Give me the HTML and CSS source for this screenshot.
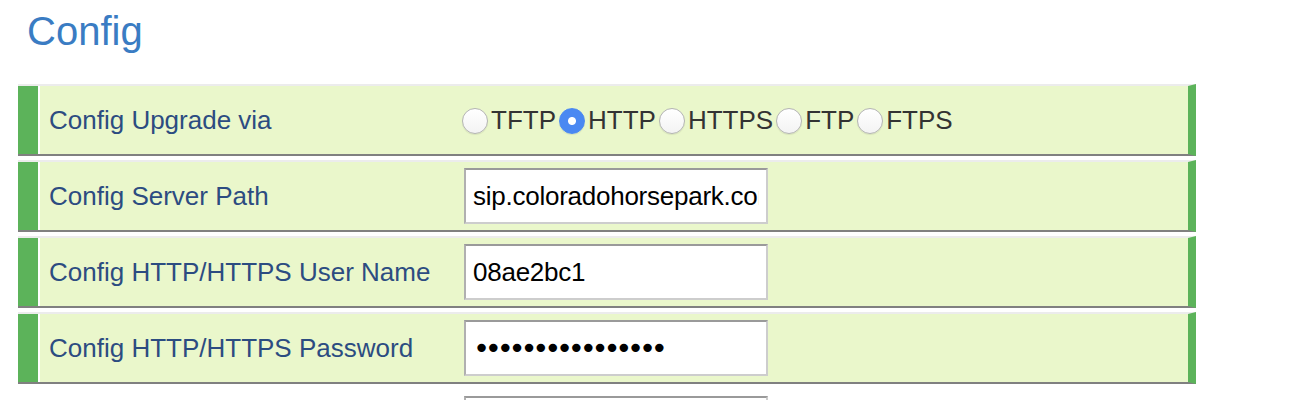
FILE: index.html
```html
<!DOCTYPE html>
<html>
<head>
<meta charset="utf-8">
<link rel="stylesheet" href="styles.css">
</head>
<body>
<div class="page">
  <h1 class="title">Config</h1>
  <div class="rows">
    <div class="row">
      <div class="marker"></div>
      <div class="label">Config Upgrade via</div>
      <div class="value">
        <input class="radio" type="radio" name="via"><span class="opt">TFTP</span>
        <input class="radio" type="radio" name="via" checked><span class="opt">HTTP</span>
        <input class="radio" type="radio" name="via"><span class="opt">HTTPS</span>
        <input class="radio" type="radio" name="via"><span class="opt">FTP</span>
        <input class="radio" type="radio" name="via"><span class="opt">FTPS</span>
      </div>
    </div>
    <div class="row">
      <div class="marker"></div>
      <div class="label">Config Server Path</div>
      <div class="value"><input class="field" type="text" value="sip.coloradohorsepark.com"></div>
    </div>
    <div class="row">
      <div class="marker"></div>
      <div class="label">Config HTTP/HTTPS User Name</div>
      <div class="value"><input class="field" type="text" value="08ae2bc1"></div>
    </div>
    <div class="row">
      <div class="marker"></div>
      <div class="label">Config HTTP/HTTPS Password</div>
      <div class="value"><input class="field pw" type="password" value="abcdefghijklmnop"></div>
    </div>
    <div class="row plain">
      <div class="marker"></div>
      <div class="label"></div>
      <div class="value"><input class="field" type="text" value=""></div>
    </div>
  </div>
</div>
</body>
</html>
```

FILE: styles.css
```css
html, body {
  margin: 0;
  padding: 0;
  background: #fff;
  font-family: "Liberation Sans", Arial, sans-serif;
}

.page {
  padding: 8px 0 0 18px;
}

.title {
  margin: 0 0 30px 9px;
  font-size: 40px;
  font-weight: normal;
  line-height: 46px;
  color: #3a7cc3;
}

.rows {
  display: flex;
  flex-direction: column;
  gap: 4px;
}

.row {
  box-sizing: border-box;
  width: 1178px;
  height: 72px;
  display: flex;
  background: #eaf7cb;
  border-top: 2px solid #ececec;
  border-bottom: 2px solid #808080;
  border-right: 8px solid #5cb35a;
}

.marker {
  width: 20px;
  flex: none;
  background: #5cb35a;
  border-right: 2px solid #fff;
}

.label {
  box-sizing: border-box;
  width: 422px;
  flex: none;
  padding-left: 9px;
  display: flex;
  align-items: center;
  font-size: 26px;
  color: #2c4c81;
}

.value {
  flex: 1;
  display: flex;
  align-items: center;
}

.radio {
  -webkit-appearance: none;
  appearance: none;
  box-sizing: border-box;
  flex: none;
  width: 26px;
  height: 26px;
  margin: 2px 3px 0 0;
  border-radius: 50%;
  border: 1px solid #b4b4b4;
  background: linear-gradient(#ffffff, #f3f3f3);
  box-shadow: 0 1px 1px rgba(0,0,0,0.08);
}

.radio:checked {
  border-color: #4a88f2;
  background: radial-gradient(circle, #ffffff 0 3.5px, #4a88f2 4.5px);
}

.opt {
  font-size: 26px;
  color: #333;
  margin-right: 3px;
}

.field {
  box-sizing: border-box;
  width: 304px;
  height: 56px;
  margin: 0 0 0 2px;
  padding: 0 7px;
  border-style: solid;
  border-width: 2px;
  border-color: #9a9a9a #cdcdcd #cdcdcd #b0b0b0;
  background: #fff;
  font-family: "Liberation Sans", Arial, sans-serif;
  font-size: 26px;
  letter-spacing: -0.25px;
  color: #000;
  outline: none;
}

.pw {
  font-family: "DejaVu Sans", sans-serif;
  font-size: 29px;
  letter-spacing: -5.25px;
}

.plain {
  background: transparent;
  border-color: transparent;
}

.plain .marker {
  background: transparent;
  border-right-color: transparent;
}
```
